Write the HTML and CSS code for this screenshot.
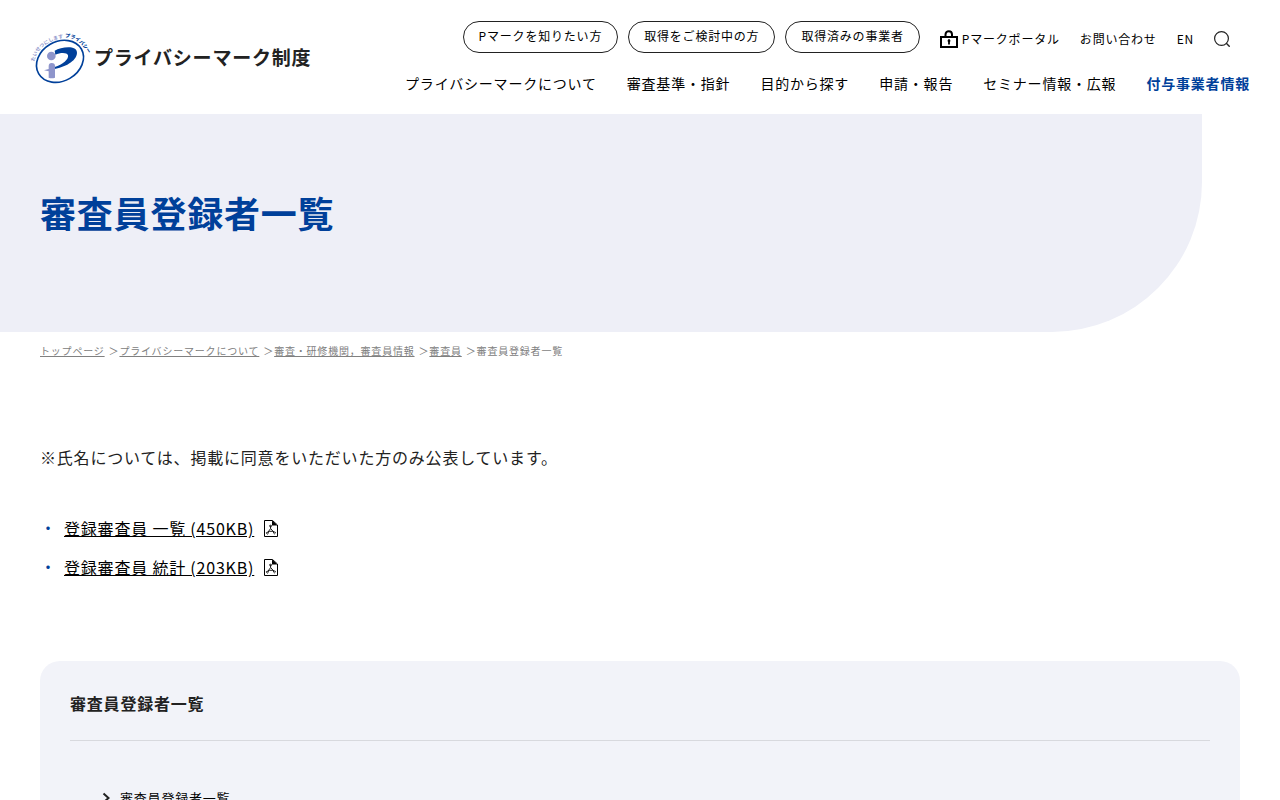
FILE: index.html
```
<!DOCTYPE html>
<html lang="ja">
<head>
    <meta charset="UTF-8">
    <meta name="viewport" content="width=device-width, initial-scale=1.0">
    <title>審査員登録者一覧 | プライバシーマーク制度</title>
    <link rel="stylesheet" href="styles.css">
</head>
<body>
    <header class="header">
        <a class="logo" href="#">
            <svg class="logo-mark" viewBox="30 30 180 162" aria-hidden="true">
                <defs>
                    <path id="arc-small" d="M43 125 C48 92 78 62 134 53"/>
                    <path id="arc-large" d="M135 52 C162 52 186 68 206 104"/>
                </defs>
                <ellipse cx="120" cy="124" rx="74" ry="59" fill="#fff" stroke="#00409a" stroke-width="5" transform="rotate(-30 120 124)"/>
                <path d="M104 92 C124 80 172 74 171 99 C170 124 132 143 102 147 L104 141 C128 134 147 118 144 106 C141 97 121 98 106 104 Z" fill="#00409a"/>
                <circle cx="94" cy="108" r="13" fill="#8e95cb"/>
                <path d="M86 138 Q86 129 95 129 Q105 129 105 138 V173 Q95 176 86 173 V154 L72 151 L86 147 Z" fill="#8e95cb"/>
                <text class="logo-small"><textPath href="#arc-small">たいせつにします</textPath></text>
                <text class="logo-large"><textPath href="#arc-large">プライバシー</textPath></text>
            </svg>
            <span class="logo-text">プライバシーマーク制度</span>
        </a>
        <div class="header-menu">
            <div class="header-top">
                <ul class="target-list">
                    <li><a class="pill" href="#">Pマークを知りたい方</a></li>
                    <li><a class="pill" href="#">取得をご検討中の方</a></li>
                    <li><a class="pill" href="#">取得済みの事業者</a></li>
                </ul>
                <ul class="utility-list">
                    <li>
                        <a class="portal" href="#">
                            <svg class="icon-lock" viewBox="0 0 18 18" aria-hidden="true">
                                <path d="M1 7H17V17H1Z" fill="none" stroke="#000" stroke-width="2"/>
                                <path d="M5.5 6V4.5C5.5 0.2 12 0.2 12 4.5V6" fill="none" stroke="#000" stroke-width="2"/>
                                <path d="M9 9A1.8 1.8 0 0 1 9.9 12V14.6H8.1V12A1.8 1.8 0 0 1 9 9Z"/>
                            </svg>
                            <span>Pマークポータル</span>
                        </a>
                    </li>
                    <li><a href="#">お問い合わせ</a></li>
                    <li><a href="#">EN</a></li>
                    <li>
                        <button class="search" type="button" aria-label="検索">
                            <svg viewBox="0 0 16 16" aria-hidden="true">
                                <circle cx="7.5" cy="7.5" r="6.9" fill="none" stroke="#222" stroke-width="1.2"/>
                                <path d="M12.3 12.3L15.7 15.7" stroke="#222" stroke-width="1.4"/>
                            </svg>
                        </button>
                    </li>
                </ul>
            </div>
            <nav>
                <ul class="global-nav">
                    <li><a href="#">プライバシーマークについて</a></li>
                    <li><a href="#">審査基準・指針</a></li>
                    <li><a href="#">目的から探す</a></li>
                    <li><a href="#">申請・報告</a></li>
                    <li><a href="#">セミナー情報・広報</a></li>
                    <li><a class="current" href="#">付与事業者情報</a></li>
                </ul>
            </nav>
        </div>
    </header>

    <div class="hero">
        <h1>審査員登録者一覧</h1>
    </div>

    <ol class="breadcrumb">
        <li><a href="#">トップページ</a></li>
        <li><a href="#">プライバシーマークについて</a></li>
        <li><a href="#">審査・研修機関，審査員情報</a></li>
        <li><a href="#">審査員</a></li>
        <li>審査員登録者一覧</li>
    </ol>

    <main class="main">
        <p>※氏名については、掲載に同意をいただいた方のみ公表しています。</p>
        <ul class="file-list">
            <li>
                <a href="#">登録審査員 一覧 (450KB)</a>
                <svg class="icon-pdf" viewBox="0 0 14 17" aria-hidden="true">
                    <path d="M0.5 0.5H8.5L13.5 5V16.5H0.5Z" fill="none" stroke="#000"/>
                    <path d="M8 0.5L13.5 5.5H8Z"/>
                    <path d="M6.6 5.5V8.6L3.6 12.6M6.6 8.6L10.2 12.4M4 12.2C6 10.9 8 10.9 10 12.2" fill="none" stroke="#000" stroke-width="0.9"/>
                    <path d="M6.6 5.2A0.9 0.9 0 1 1 6.5 5.2M3.4 12.2A0.9 0.9 0 1 1 3.3 12.2M10.5 11.9A0.9 0.9 0 1 1 10.4 11.9" fill="none" stroke="#000" stroke-width="0.8"/>
                </svg>
            </li>
            <li>
                <a href="#">登録審査員 統計 (203KB)</a>
                <svg class="icon-pdf" viewBox="0 0 14 17" aria-hidden="true">
                    <path d="M0.5 0.5H8.5L13.5 5V16.5H0.5Z" fill="none" stroke="#000"/>
                    <path d="M8 0.5L13.5 5.5H8Z"/>
                    <path d="M6.6 5.5V8.6L3.6 12.6M6.6 8.6L10.2 12.4M4 12.2C6 10.9 8 10.9 10 12.2" fill="none" stroke="#000" stroke-width="0.9"/>
                    <path d="M6.6 5.2A0.9 0.9 0 1 1 6.5 5.2M3.4 12.2A0.9 0.9 0 1 1 3.3 12.2M10.5 11.9A0.9 0.9 0 1 1 10.4 11.9" fill="none" stroke="#000" stroke-width="0.8"/>
                </svg>
            </li>
        </ul>

        <section class="local-nav">
            <h2>審査員登録者一覧</h2>
            <ul>
                <li>
                    <a href="#">
                        <svg class="icon-arrow" viewBox="0 0 8 12" aria-hidden="true">
                            <path d="M1.5 1.5L6.5 6L1.5 10.5" fill="none" stroke="#222" stroke-width="2"/>
                        </svg>
                        <span>審査員登録者一覧</span>
                    </a>
                </li>
            </ul>
        </section>
    </main>
</body>
</html>
```
FILE: styles.css
```
* {
    box-sizing: border-box;
}
body {
    margin: 0;
    background-color: #fff;
    color: #222;
    font-family: "Noto Sans CJK JP", sans-serif;
    font-size: 16px;
    line-height: 24px;
    letter-spacing: 0.05em;
}
ul, ol {
    margin: 0;
    padding: 0;
    list-style: none;
}
h1, h2, p {
    margin: 0;
}
a {
    color: #000;
}

/* header */
.header {
    display: flex;
    justify-content: space-between;
    padding: 21px 30px 19px;
}
.header a {
    text-decoration: none;
}
.logo {
    display: flex;
    align-items: center;
    gap: 4px;
    padding-bottom: 2px;
}
.logo-mark {
    width: 60px;
    height: 54px;
    overflow: visible;
}
.logo-small {
    fill: #8e95cb;
    font-size: 15px;
    font-weight: bold;
    letter-spacing: 0;
}
.logo-large {
    fill: #00409a;
    font-size: 15px;
    font-weight: 900;
    letter-spacing: 0;
}
.logo-text {
    color: #222;
    font-size: 19px;
    font-weight: bold;
}
.header-menu {
    display: flex;
    flex-direction: column;
    align-items: flex-end;
    gap: 18px;
}
.header-top {
    display: flex;
    gap: 20px;
    padding-right: 20px;
    font-size: 12px;
}
.target-list {
    display: flex;
    gap: 10px;
}
.pill {
    display: block;
    height: 32px;
    padding: 0 15px;
    border: 1px solid #222;
    border-radius: 16px;
    line-height: 28px;
}
.utility-list {
    display: flex;
    align-items: center;
    gap: 20px;
    padding-top: 4px;
}
.portal {
    display: flex;
    align-items: center;
    gap: 4px;
}
.icon-lock {
    width: 18px;
    height: 18px;
}
.search {
    display: block;
    width: 16px;
    height: 16px;
    padding: 0;
    border: 0;
    background: none;
    cursor: pointer;
}
.search svg {
    display: block;
}
.global-nav {
    display: flex;
    gap: 30px;
    font-size: 14px;
}
.global-nav .current {
    color: #00409a;
    font-weight: bold;
}

/* page title */
.hero {
    margin-right: 78px;
    padding: 70px 40px 92px;
    border-bottom-right-radius: 150px;
    background-color: #eeeff7;
}
.hero h1 {
    color: #00409a;
    font-size: 36px;
    line-height: 56px;
}

.breadcrumb {
    display: flex;
    flex-wrap: wrap;
    padding: 7px 40px 8px;
    color: #808080;
    font-size: 10px;
}
.breadcrumb a {
    color: #808080;
}
.breadcrumb li + li::before {
    content: "＞";
    margin-left: 4px;
}

/* contents */
.main {
    padding: 74px 40px 80px;
}
.file-list {
    display: grid;
    gap: 15px;
    margin-top: 47px;
}
.file-list li {
    display: flex;
    align-items: center;
}
.file-list li::before {
    content: "・";
    align-self: flex-start;
    width: 24px;
    color: #00409a;
    line-height: 22px;
}
.icon-pdf {
    width: 14px;
    height: 17px;
    margin-left: 10px;
}

.local-nav {
    margin-top: 82px;
    padding: 30px;
    border-radius: 20px;
    background-color: #f2f3f9;
}
.local-nav h2 {
    padding-bottom: 25px;
    border-bottom: 1px solid #d8d9de;
    font-size: 16px;
}
.local-nav ul {
    padding: 45px 32px 30px;
    font-size: 13px;
}
.local-nav a {
    display: flex;
    align-items: center;
    gap: 10px;
    text-decoration: none;
}
.icon-arrow {
    width: 8px;
    height: 12px;
}
```
